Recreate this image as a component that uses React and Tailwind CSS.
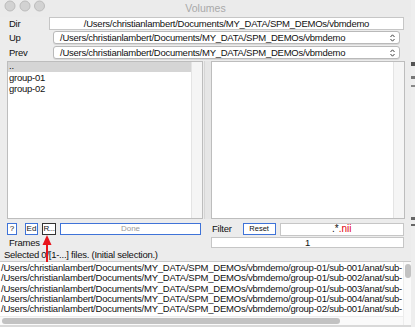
const paths = [
  "/Users/christianlambert/Documents/MY_DATA/SPM_DEMOs/vbmdemo/group-01/sub-001/anat/sub-",
  "/Users/christianlambert/Documents/MY_DATA/SPM_DEMOs/vbmdemo/group-01/sub-002/anat/sub-",
  "/Users/christianlambert/Documents/MY_DATA/SPM_DEMOs/vbmdemo/group-01/sub-003/anat/sub-",
  "/Users/christianlambert/Documents/MY_DATA/SPM_DEMOs/vbmdemo/group-01/sub-004/anat/sub-",
  "/Users/christianlambert/Documents/MY_DATA/SPM_DEMOs/vbmdemo/group-02/sub-001/anat/sub-",
];
const DIR = "/Users/christianlambert/Documents/MY_DATA/SPM_DEMOs/vbmdemo";

function Chevrons() {
  return (
    <svg width="5" height="8" viewBox="0 0 5 8" className="shrink-0">
      <path d="M0.5 3 L2.5 0.8 L4.5 3" fill="none" stroke="#444" strokeWidth="1" />
      <path d="M0.5 5 L2.5 7.2 L4.5 5" fill="none" stroke="#444" strokeWidth="1" />
    </svg>
  );
}

function SelectBox({ text }) {
  return (
    <div className="w-[347px] h-[13px] rounded-[3px] border border-[#b9b9b9] bg-white shadow-[0_1px_0_rgba(0,0,0,0.08)] flex items-center justify-between pl-[6px] pr-[4px] text-[9.5px] leading-[10px] tracking-[-0.25px] text-[#111]">
      <span className="whitespace-nowrap">{text}</span>
      <Chevrons />
    </div>
  );
}

function Lights() {
  return (
    <svg width="46" height="13" viewBox="0 0 46 13" className="block">
      <circle cx="10" cy="6" r="5" fill="#d2d2d2" stroke="#bcbcbc" strokeWidth="1" />
      <circle cx="25" cy="6" r="5" fill="#d2d2d2" stroke="#bcbcbc" strokeWidth="1" />
      <circle cx="39.5" cy="6" r="5" fill="#d2d2d2" stroke="#bcbcbc" strokeWidth="1" />
    </svg>
  );
}

export default function App() {
  return (
    <div className="w-[415px] h-[327px] overflow-hidden flex bg-[#d9d9d9] font-['Liberation_Sans',Arial,sans-serif] text-[#111]">
      <div className="w-[411px] h-[325px] flex flex-col bg-[#ececec] relative">
        {/* title bar */}
        <div className="h-[17px] grid grid-cols-[1fr_auto_1fr] items-start bg-[#ebebeb]">
          <div className="pt-[0px]">
            <Lights />
          </div>
          <span className="text-[10.5px] leading-[11px] text-[#a9a9a9] pt-[3px]">Volumes</span>
          <div />
        </div>

        <div className="flex flex-col text-[9.5px] leading-[10px] tracking-[-0.25px]">
          {/* Dir */}
          <div className="h-[13px] flex items-center">
            <span className="w-[49px] pl-[9px]">Dir</span>
            <div className="w-[355px] h-[13px] bg-white border border-[#c6c6c6] flex items-center justify-center whitespace-nowrap">
              {DIR}
            </div>
          </div>

          {/* Up */}
          <div className="h-[13px] mt-[1px] flex items-center">
            <span className="w-[53px] pl-[9px]">Up</span>
            <SelectBox text={DIR} />
          </div>

          {/* Prev */}
          <div className="h-[13px] mt-[2px] flex items-center">
            <span className="w-[53px] pl-[9px]">Prev</span>
            <SelectBox text={DIR} />
          </div>

          {/* panels */}
          <div className="flex mt-[2px] h-[158px]">
            <div className="ml-[7px] w-[196px] h-full flex border border-[#bdbdbd] bg-white">
              <div className="flex-1 flex flex-col leading-[11px]">
                <div className="bg-[#d5d5d5] pl-[1px] h-[10px] leading-[7px]">..</div>
                <div className="pl-[1px]">group-01</div>
                <div className="pl-[1px]">group-02</div>
              </div>
              <div className="w-[11px] h-full bg-[#f5f5f5] border-l border-[#e4e4e4]" />
            </div>
            <div className="ml-[1px] w-[7px] h-full bg-[#e6e6e6] border-l border-[#d6d6d6]" />
            <div className="w-[194px] h-full flex border border-[#bdbdbd] bg-white">
              <div className="flex-1" />
              <div className="w-[11px] h-full bg-[#f5f5f5] border-l border-[#e4e4e4]" />
            </div>
          </div>

          {/* buttons row */}
          <div className="h-[12px] mt-[4px] flex items-center text-[8px] leading-[8px] tracking-normal">
            <div className="ml-[7px] w-[10px] h-[12px] border border-[#3f73d8] bg-white flex items-center justify-center">?</div>
            <div className="ml-[8px] w-[13px] h-[12px] border border-[#3f73d8] bg-white flex items-center justify-center">Ed</div>
            <div className="ml-[4px] w-[14px] h-[12px] border border-[#333] bg-white flex items-center justify-center tracking-[-0.3px]">R...</div>
            <div className="ml-[4px] w-[141px] h-[12px] border border-[#3f73d8] bg-white flex items-center justify-center text-[#9a9a9a]">Done</div>
            <span className="ml-[11px] text-[9.5px] tracking-[-0.25px]">Filter</span>
            <div className="ml-[11px] w-[33px] h-[12px] border-[1.5px] border-[#3f73d8] bg-white flex items-center justify-center text-[7.5px]">Reset</div>
            <div className="ml-[4px] flex-1 mr-[7px] h-[13px] border border-[#c6c6c6] bg-white flex items-center justify-center text-[10px] leading-[10px]">
              <span>.*</span><span className="text-[#e3000f]">.nii</span>
            </div>
          </div>

          {/* Frames */}
          <div className="h-[11px] mt-[2px] flex items-center">
            <span className="w-[211px] pl-[9px]">Frames</span>
            <div className="w-[193px] h-[11px] border border-[#c6c6c6] bg-white flex items-center justify-center">1</div>
          </div>

          {/* status */}
          <div className="h-[11px] mt-[1px] pl-[4px] leading-[11px] whitespace-nowrap">
            Selected 0/[1-...] files. (Initial selection.)
          </div>
        </div>

        {/* bottom list */}
        <div className="mt-[1px] flex-1 flex border-t border-[#c9c9c9] bg-white">
          <div className="w-[403px] flex flex-col overflow-hidden">
            <div className="flex-1 flex flex-col pt-[1px] pl-[1px] text-[9.5px] leading-[10.25px] whitespace-nowrap tracking-[-0.22px]">
              {paths.map((p) => (
                <div key={p}>{p}</div>
              ))}
            </div>
            <div className="h-[9px] flex items-center pl-[2px] border-t border-[#ededed] bg-[#fafafa]">
              <div className="w-[338px] h-[6px] rounded-full bg-[#c2c2c2]" />
            </div>
          </div>
          <div className="w-[8px] flex flex-col items-center pt-[2px] bg-[#fafafa] border-l border-[#ededed]">
            <div className="w-[6px] h-[14px] rounded-full bg-[#c2c2c2]" />
          </div>
        </div>

        {/* red arrow */}
        <svg className="absolute left-[42px] top-[235px]" width="10" height="27" viewBox="0 0 10 27">
          <polygon points="5,0 9.5,10 0.5,10" fill="#e8141c" />
          <rect x="4" y="9" width="2" height="18" fill="#e8141c" />
        </svg>
      </div>
      <div className="w-[4px] h-full flex flex-col bg-[#eeeeee]">
        <div className="h-[62px]" />
        <div className="h-[4px] bg-[#555]" />
        <div className="h-[10px]" />
        <div className="h-[3px] bg-[#777]" />
        <div className="h-[6px]" />
        <div className="h-[2px] bg-[#888]" />
        <div className="h-[130px]" />
        <div className="h-[3px] bg-[#666]" />
        <div className="h-[4px]" />
        <div className="h-[2px] bg-[#666]" />
      </div>
    </div>
  );
}
